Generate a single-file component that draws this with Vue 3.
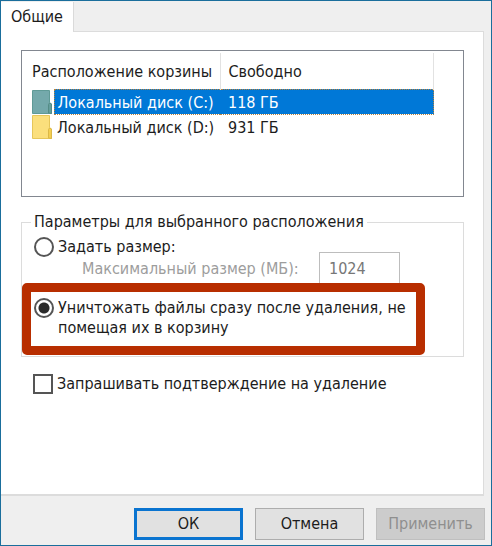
<template>
    <main class="dialog">
        <nav class="tabs">
            <button class="tab" type="button">Общие</button>
        </nav>

        <form id="bin-form" class="page" @submit.prevent>
            <div class="list">
                <table>
                    <colgroup>
                        <col class="col-icon">
                        <col class="col-name">
                        <col>
                    </colgroup>
                    <thead>
                        <tr>
                            <th colspan="2">Расположение корзины</th>
                            <th>Свободно</th>
                        </tr>
                    </thead>
                    <tbody>
                        <tr v-for="disk in disks" :key="disk.name" :class="{ selected: disk.name === selected }" @click="selected = disk.name">
                            <td class="icon">
                                <svg width="20" height="24" viewBox="0 0 20 24">
                                    <path class="folder" d="M.5 .5H17.5V12.5L19.5 14V23.5H.5Z" />
                                    <path class="fold" d="M16.5 23V14.5L17.5 13L19.5 14V23.5Z" />
                                </svg>
                            </td>
                            <td class="name">{{ disk.name }}</td>
                            <td class="free">{{ disk.free }}</td>
                        </tr>
                    </tbody>
                </table>
            </div>

            <fieldset>
                <legend>Параметры для выбранного расположения</legend>
                <label class="option">
                    <input v-model="mode" type="radio" name="mode" value="size">
                    <span>Задать размер:</span>
                </label>
                <div class="size">
                    <label for="max-size">Максимальный размер (МБ):</label>
                    <input id="max-size" v-model="maxSize" type="text" :disabled="mode !== 'size'">
                </div>
                <label class="option marked">
                    <input v-model="mode" type="radio" name="mode" value="delete">
                    <span>Уничтожать файлы сразу после удаления, не помещая их в корзину</span>
                </label>
            </fieldset>

            <label class="option confirm">
                <input v-model="confirmDelete" type="checkbox">
                <span>Запрашивать подтверждение на удаление</span>
            </label>
        </form>

        <footer class="buttons">
            <button class="ok" type="submit" form="bin-form">ОК</button>
            <button type="button">Отмена</button>
            <button type="button" disabled>Применить</button>
        </footer>
    </main>
</template>

<script setup>
import { ref } from 'vue'

const disks = [
    { name: 'Локальный диск (C:)', free: '118 ГБ' },
    { name: 'Локальный диск (D:)', free: '931 ГБ' }
]

const selected = ref(disks[0].name)
const mode = ref('delete')
const maxSize = ref('1024')
const confirmDelete = ref(false)
</script>

<style>
body {
    margin: 0;
}
</style>

<style scoped>
* {
    box-sizing: border-box;
}

.dialog {
    display: flex;
    flex-direction: column;
    min-height: 100vh;
    border: 1px solid #1a6e9c;
    background: #efefef;
    color: #1c1c1c;
    font-family: "DejaVu Sans Condensed", "DejaVu Sans", sans-serif;
    font-size: 16px;
    line-height: 20px;
}

button,
input {
    margin: 0;
    font: inherit;
    color: inherit;
}

.tabs {
    display: flex;
    padding-top: 1px;
}

.tab {
    position: relative;
    width: 73px;
    height: 30px;
    margin-bottom: -1px;
    padding: 0;
    border: 0;
    border-right: 1px solid #dadada;
    background: #fff;
}

.page {
    flex: 1;
    margin-right: 7px;
    padding: 18px 19px 20px 20px;
    border: 2px solid #dcdcdc;
    border-width: 1px 1px 2px 0;
    background: #fff;
}

.list {
    height: 147px;
    padding: 2px 29px 0 9px;
    border: 1px solid #828790;
}

table {
    width: 100%;
    table-layout: fixed;
    border-collapse: collapse;
}

.col-icon {
    width: 23px;
}

.col-name {
    width: 166px;
}

th {
    height: 36px;
    padding: 2px 0 0 1px;
    border-right: 1px solid #e2e2e2;
    font-weight: normal;
    text-align: left;
    white-space: nowrap;
}

th + th {
    padding-left: 8px;
}

td {
    height: 25px;
    padding: 2px 0 0 8px;
    white-space: nowrap;
}

td.icon {
    padding: 0 0 0 1px;
}

td.name {
    padding-left: 3px;
}

.icon svg {
    display: block;
}

.folder {
    fill: #fbdf7c;
    stroke: #e6c65a;
}

.fold {
    fill: #f4cf52;
    stroke: #dcb848;
}

.selected .folder {
    fill: #74a9ab;
    stroke: #5f9a96;
}

.selected .fold {
    fill: #659e9c;
    stroke: #548c86;
}

.selected .name,
.selected .free {
    border: 1px dotted #b58340;
    border-width: 1px 0;
    background: #0078d7;
    color: #fff;
}

.selected .name {
    border-left-width: 1px;
}

.selected .free {
    border-right-width: 1px;
}

fieldset {
    min-width: 0;
    margin: 15px 0 0;
    padding: 5px 0 1px;
    border: 1px solid #dcdcdc;
}

legend {
    margin-left: 9px;
    padding: 0 3px;
}

.option {
    display: flex;
    align-items: flex-start;
    gap: 4px;
    padding-left: 12px;
}

.option input {
    flex: none;
    width: 20px;
    height: 20px;
    appearance: none;
    border: 2px solid #555;
    background: #fff;
}

.option input[type="radio"] {
    border-radius: 50%;
}

.option input[type="radio"]:checked {
    background: radial-gradient(circle, #2b2b2b 5px, #fff 6px);
}

.size {
    display: flex;
    align-items: flex-start;
    height: 26px;
    padding-left: 60px;
    color: #9d9d9d;
}

.size label {
    flex: none;
    width: 237px;
    padding-top: 2px;
}

.size input {
    width: 81px;
    height: 33px;
    margin-top: -5px;
    padding: 0 9px;
    border: 1px solid #bdbdbd;
    background: #fff;
    color: #777;
}

.marked {
    position: relative;
    max-width: 403px;
    min-height: 72px;
    padding: 6px 4px 6px 3px;
    border: 9px solid #b82e00;
    border-radius: 5px;
    background: #fff;
}

.confirm {
    margin-top: 17px;
}

.buttons {
    display: flex;
    justify-content: flex-end;
    gap: 12px;
    padding: 12px 6px 5px;
}

.buttons button {
    width: 109px;
    height: 32px;
    padding: 0;
    border: 1px solid #adadad;
    background: #e1e1e1;
}

.buttons .ok {
    border: 3px solid #0a74d0;
}

.buttons button:disabled {
    border-color: #bfbfbf;
    background: #cccccc;
    color: #8f8f8f;
}
</style>
